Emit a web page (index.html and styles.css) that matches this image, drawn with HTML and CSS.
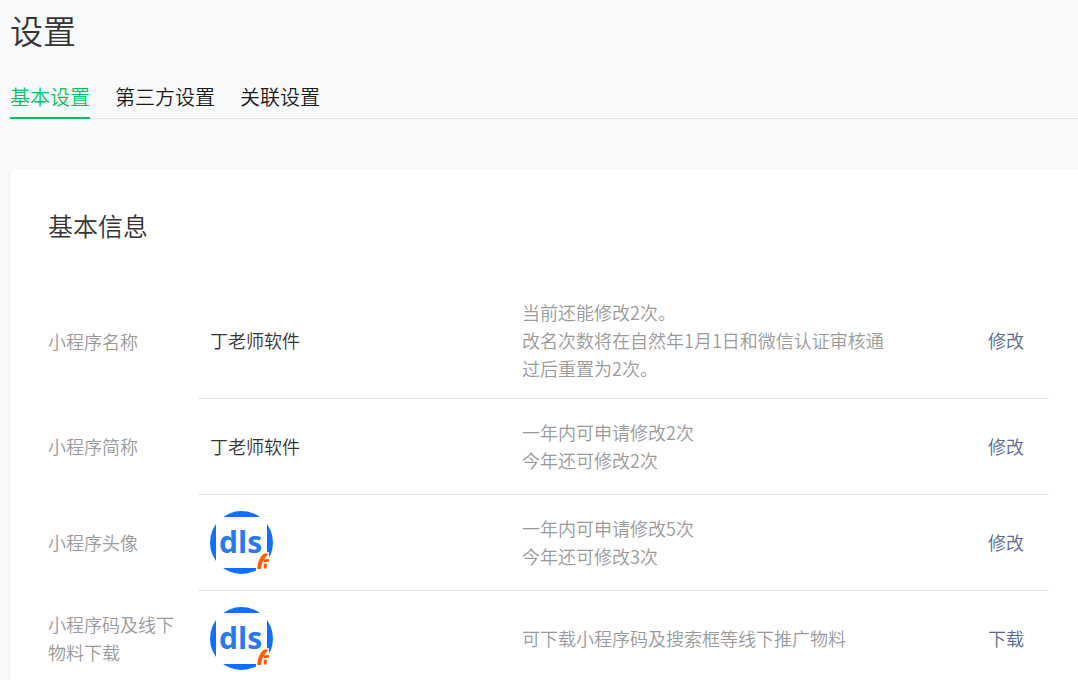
FILE: index.html
```
<!DOCTYPE html>
<html lang="zh-CN">
<head>
  <meta charset="UTF-8" />
  <meta name="viewport" content="width=device-width, initial-scale=1.0"/>
  <title>设置</title>
  <link rel="stylesheet" href="styles.css">
</head>
<body>

  <!-- logo shared by the avatar and the code rows -->
  <svg class="sprite" aria-hidden="true">
    <symbol id="logo" viewBox="0 0 63 63">
      <circle cx="31.5" cy="31.5" r="31.5" fill="#0f6fff"/>
      <rect x="6" y="6" width="51" height="51" fill="#fff"/>
      <text class="logo-text" x="9" y="42">dls</text>
      <path d="M59 41V52L57 60L52 63H46V52C47 46 50 42 59 41Z" fill="#fff"/>
      <path d="M58.500 42.500L55.500 46.500C53 50 51.500 53 51 58H47.300C47.500 51 50.500 44 55 42.500Z" fill="#ff5a0a"/>
      <path d="M53.500 48.500L59 48V50.500L53.500 51.500ZM53.500 53L57 52.500L56.500 57.500H54Z" fill="#ff5a0a"/>
    </symbol>
  </svg>

  <header class="page-header">
    <h1>设置</h1>
    <nav class="tabs">
      <a href="#basic" class="tab active">基本设置</a>
      <a href="#third" class="tab">第三方设置</a>
      <a href="#relation" class="tab">关联设置</a>
    </nav>
  </header>

  <main class="card" id="basic">
    <h2>基本信息</h2>
    <table class="info">
      <colgroup>
        <col class="col-label">
        <col class="col-value">
        <col>
        <col class="col-action">
      </colgroup>
      <tbody>
        <tr>
          <th scope="row">小程序名称</th>
          <td>丁老师软件</td>
          <td class="desc">当前还能修改2次。<br>改名次数将在自然年1月1日和微信认证审核通过后重置为2次。</td>
          <td class="action"><a href="#">修改</a></td>
        </tr>
        <tr>
          <th scope="row">小程序简称</th>
          <td>丁老师软件</td>
          <td class="desc">一年内可申请修改2次<br>今年还可修改2次</td>
          <td class="action"><a href="#">修改</a></td>
        </tr>
        <tr>
          <th scope="row">小程序头像</th>
          <td><svg class="avatar" role="img" aria-label="小程序头像"><use href="#logo"/></svg></td>
          <td class="desc">一年内可申请修改5次<br>今年还可修改3次</td>
          <td class="action"><a href="#">修改</a></td>
        </tr>
        <tr>
          <th scope="row">小程序码及线下物料下载</th>
          <td><svg class="avatar" role="img" aria-label="小程序码"><use href="#logo"/></svg></td>
          <td class="desc">可下载小程序码及搜索框等线下推广物料</td>
          <td class="action"><a href="#">下载</a></td>
        </tr>
      </tbody>
    </table>
  </main>

</body>
</html>
```
FILE: styles.css
```
* {
  margin: 0;
  padding: 0;
  box-sizing: border-box;
}

body {
  background-color: #f8f9fb;
  color: #353535;
  font-family: 'Noto Sans CJK SC', sans-serif;
  font-size: 18px;
  font-weight: 350;
  line-height: 28px;
  padding-left: 10px;
}

a {
  color: #576b95;
  text-decoration: none;
}

.sprite {
  display: none;
}

.logo-text {
  font-family: 'Open Sans', sans-serif;
  font-size: 30px;
  font-weight: 700;
  fill: #2878f0;
}

h1 {
  font-size: 33px;
  font-weight: 350;
  line-height: 60px;
}

.tabs {
  display: flex;
  gap: 25px;
  margin-top: 17px;
  box-shadow: inset 0 -1px #e0e1e3;
}

.tab {
  border-bottom: 2px solid transparent;
  color: #1a1b1c;
  font-size: 20px;
  line-height: 40px;
}

.tab.active {
  border-bottom-color: #07c160;
  color: #07c160;
}

.card {
  margin-top: 50px;
  padding: 36px 29px 40px 38px;
  background: #fff;
  border-radius: 4px 0 0 4px;
  box-shadow: 0 1px 2px rgba(0, 0, 0, 0.12);
}

h2 {
  margin-bottom: 39px;
  font-size: 25px;
  font-weight: 350;
  line-height: 40px;
}

.info {
  width: 100%;
  table-layout: fixed;
  border-collapse: separate;
  border-spacing: 0;
}

.col-label {
  width: 150px;
}

.col-value {
  width: 312px;
}

.col-action {
  width: 149px;
}

.info tr {
  height: 96px;
}

.info th {
  padding-right: 20px;
  padding-bottom: 2px;
  color: #9a9a9a;
  font-weight: 350;
  text-align: left;
}

.info td {
  padding: 14px 12px 16px;
  border-bottom: 1px solid #e4e4e4;
}

.info .desc {
  color: #9a9a9a;
}

.info .action {
  padding-right: 25px;
  text-align: right;
}

.avatar {
  display: block;
  width: 63px;
  height: 63px;
  margin-top: 2px;
}
```
